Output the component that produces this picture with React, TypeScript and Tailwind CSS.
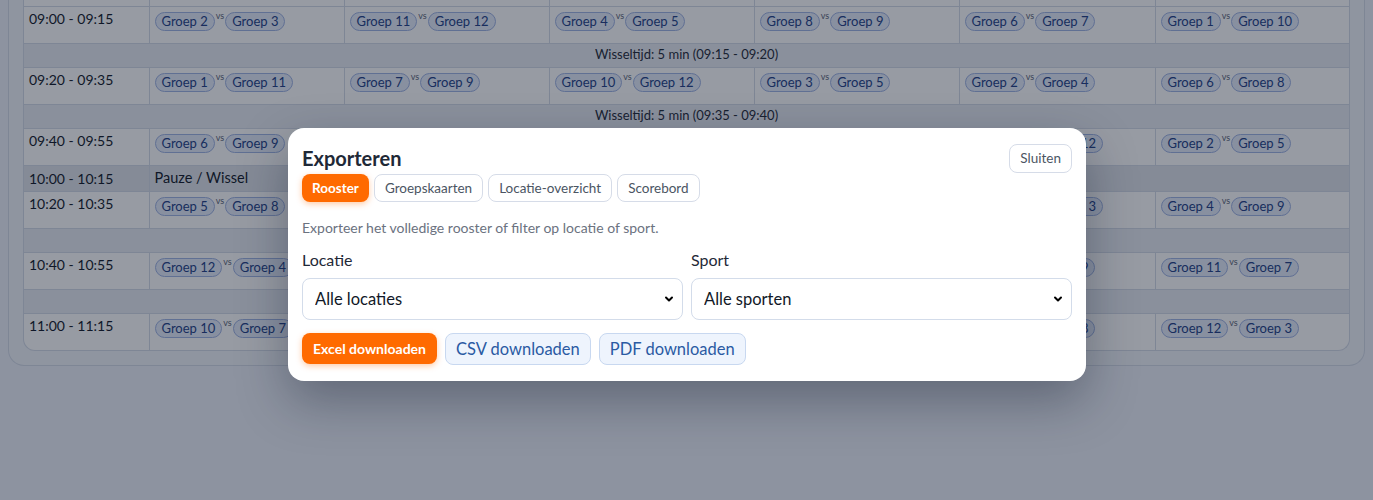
import { ChevronDown } from 'lucide-react'

type Match = [number, number] | null

interface Slot {
  kind: 'match' | 'wissel' | 'pauze'
  time?: string
  label?: string
  matches?: Match[]
}

// cells that sit fully behind the dialog are left empty
const slots: Slot[] = [
  {
    kind: 'match',
    time: '09:00 - 09:15',
    matches: [[2, 3], [11, 12], [4, 5], [8, 9], [6, 7], [1, 10]],
  },
  { kind: 'wissel', label: 'Wisseltijd: 5 min (09:15 - 09:20)' },
  {
    kind: 'match',
    time: '09:20 - 09:35',
    matches: [[1, 11], [7, 9], [10, 12], [3, 5], [2, 4], [6, 8]],
  },
  { kind: 'wissel', label: 'Wisseltijd: 5 min (09:35 - 09:40)' },
  {
    kind: 'match',
    time: '09:40 - 09:55',
    matches: [[6, 9], null, null, null, [7, 12], [2, 5]],
  },
  { kind: 'pauze', time: '10:00 - 10:15', label: 'Pauze / Wissel' },
  {
    kind: 'match',
    time: '10:20 - 10:35',
    matches: [[5, 8], null, null, null, [10, 3], [4, 9]],
  },
  { kind: 'wissel', label: '' },
  {
    kind: 'match',
    time: '10:40 - 10:55',
    matches: [[12, 4], null, null, null, [8, 9], [11, 7]],
  },
  { kind: 'wissel', label: '' },
  {
    kind: 'match',
    time: '11:00 - 11:15',
    matches: [[10, 7], null, null, null, [2, 8], [12, 3]],
  },
]

function Pill({ n }: { n: number }) {
  return (
    <span className="inline-flex h-[19px] items-center rounded-full border border-[#9fb3e3] bg-[#e4ebfa] px-[6px] text-[13px] leading-none text-[#223f86]">
      Groep {n}
    </span>
  )
}

function MatchCell({ m }: { m: Match }) {
  if (!m) return null
  return (
    <div className="flex items-start">
      <Pill n={m[0]} />
      <span className="mx-[1px] -mt-[1px] text-[9px] leading-none text-[#5b6478]">vs</span>
      <Pill n={m[1]} />
    </div>
  )
}

function Schedule() {
  return (
    <div className="mx-2 rounded-b-2xl border border-t-0 border-[#d3dae7] bg-[#f1f4fa] px-[14px] pb-[14px]">
      <div className="overflow-hidden rounded-b-xl border border-t-0 border-[#d3dae7] bg-white">
        <table className="w-full table-fixed border-collapse text-[#111827]">
          <colgroup>
            <col className="w-[125px]" />
            <col className="w-[195px]" />
            <col className="w-[205px]" />
            <col className="w-[205px]" />
            <col className="w-[205px]" />
            <col className="w-[196px]" />
            <col />
          </colgroup>
          <tbody>
            <tr className="h-[6px]">
              {Array.from({ length: 7 }).map((_, i) => (
                <td key={i} className="border-l border-[#d3dae7] first:border-l-0" />
              ))}
            </tr>
            {slots.map((s, i) => {
              if (s.kind === 'wissel') {
                return (
                  <tr key={i} className="h-[24px] bg-[#e9ecf2]">
                    <td colSpan={7} className="border-t border-[#d3dae7] text-center text-[13px] text-[#1f2937]">
                      {s.label}
                    </td>
                  </tr>
                )
              }
              if (s.kind === 'pauze') {
                return (
                  <tr key={i} className="h-[26px] bg-[#e0e3ea]">
                    <td className="border-t border-[#d3dae7] pl-[5px] text-[14px]">{s.time}</td>
                    <td colSpan={6} className="border-t border-l border-[#d3dae7] pl-[5px] text-[14.5px]">
                      {s.label}
                    </td>
                  </tr>
                )
              }
              return (
                <tr key={i} className="h-[37px]">
                  <td className="border-t border-[#d3dae7] pl-[5px] pt-[2px] align-top text-[14px] leading-5">
                    {s.time}
                  </td>
                  {s.matches!.map((m, j) => (
                    <td key={j} className="border-t border-l border-[#d3dae7] pl-[5px] pt-[5px] align-top">
                      <MatchCell m={m} />
                    </td>
                  ))}
                </tr>
              )
            })}
          </tbody>
        </table>
      </div>
    </div>
  )
}

function SelectField({ label, value }: { label: string; value: string }) {
  return (
    <div className="flex-1">
      <div className="mb-[6px] text-[16px] leading-6 text-[#1f2937]">{label}</div>
      <div className="relative">
        <select className="h-[42px] w-full appearance-none rounded-lg border border-[#d3dcea] bg-white px-3 text-[16.5px] text-[#111827]">
          <option>{value}</option>
        </select>
        <ChevronDown
          className="pointer-events-none absolute right-[8px] top-[15px] h-[12px] w-[12px] text-black"
          strokeWidth={4}
        />
      </div>
    </div>
  )
}

function ExportModal() {
  const tabs = ['Rooster', 'Groepskaarten', 'Locatie-overzicht', 'Scorebord']
  return (
    <div className="absolute left-[288px] top-[128px] w-[798px] rounded-2xl bg-white px-[14px] pb-4 pt-4 shadow-[0_20px_50px_rgba(15,23,42,0.35)]">
      <div className="flex items-start justify-between">
        <div>
          <h2 className="mt-[3px] text-[20px] font-bold leading-[22px] text-[#1f2937]">Exporteren</h2>
          <div className="mt-[5px] flex gap-[5px]">
            {tabs.map((t, i) =>
              i === 0 ? (
                <button
                  key={t}
                  className="h-[28px] rounded-lg bg-[#ff6a00] px-[10px] text-[13.5px] font-bold text-white shadow-[0_2px_6px_rgba(255,106,0,0.35)]"
                >
                  {t}
                </button>
              ) : (
                <button
                  key={t}
                  className="h-[28px] rounded-lg border border-[#d6dce8] bg-white px-[10px] text-[13.5px] text-[#4b5563]"
                >
                  {t}
                </button>
              )
            )}
          </div>
        </div>
        <button className="h-[29px] rounded-lg border border-[#d6dce8] bg-white px-[10px] text-[13.5px] text-[#4b5563]">
          Sluiten
        </button>
      </div>
      <p className="mt-4 text-[14px] leading-5 text-[#6b7280]">
        Exporteer het volledige rooster of filter op locatie of sport.
      </p>
      <div className="mt-[10px] flex gap-2">
        <SelectField label="Locatie" value="Alle locaties" />
        <SelectField label="Sport" value="Alle sporten" />
      </div>
      <div className="mt-[13px] flex gap-2">
        <button className="h-[31px] rounded-lg bg-[#ff6a00] px-[11px] text-[14px] font-bold text-white shadow-[0_2px_6px_rgba(255,106,0,0.35)]">
          Excel downloaden
        </button>
        <button className="h-[32px] rounded-lg border border-[#c8d8f0] bg-[#eef4fd] px-[10px] text-[16.5px] text-[#2a5aa3]">
          CSV downloaden
        </button>
        <button className="h-[32px] rounded-lg border border-[#c8d8f0] bg-[#eef4fd] px-[10px] text-[16.5px] text-[#2a5aa3]">
          PDF downloaden
        </button>
      </div>
    </div>
  )
}

export default function App() {
  return (
    <div className="relative h-[500px] overflow-hidden bg-[#edf1fa] font-[Lato,'Noto_Sans',sans-serif]">
      <Schedule />
      <div className="absolute inset-0 bg-[rgba(15,23,42,0.43)]" />
      <ExportModal />
    </div>
  )
}
